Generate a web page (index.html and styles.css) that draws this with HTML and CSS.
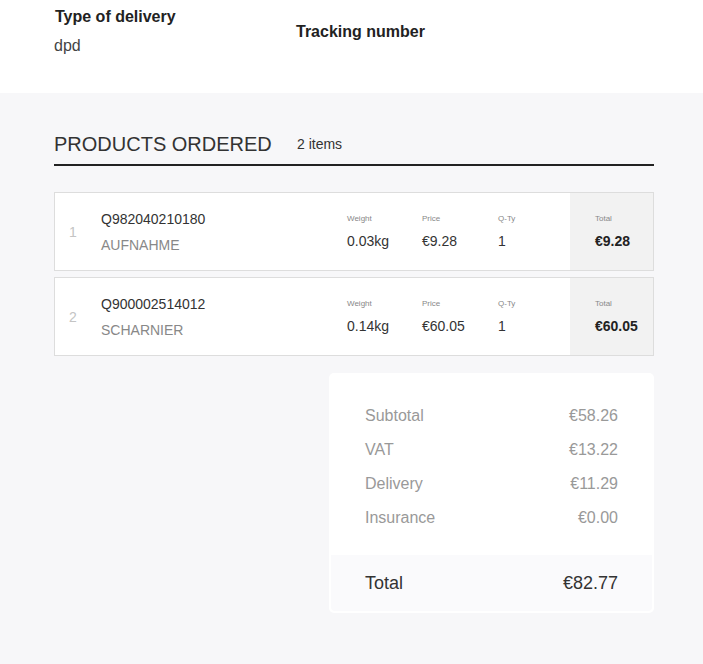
FILE: index.html
```html
<!DOCTYPE html>
<html lang="en">
<head>
<meta charset="utf-8">
<title>Order</title>
<link rel="stylesheet" href="styles.css">
</head>
<body>
<section class="delivery">
  <div class="delivery-col">
    <div class="delivery-title">Type of delivery</div>
    <div class="delivery-value">dpd</div>
  </div>
  <div class="delivery-col tracking">
    <div class="delivery-title">Tracking number</div>
  </div>
</section>
<section class="products">
  <div class="products-head">
    <h2 class="products-title">PRODUCTS ORDERED</h2>
    <span class="products-count">2 items</span>
  </div>
  <div class="product-list">
    <div class="product">
      <div class="p-index">1</div>
      <div class="p-info">
        <div class="p-code">Q982040210180</div>
        <div class="p-name">AUFNAHME</div>
      </div>
      <div class="p-cell"><div class="p-label">Weight</div><div class="p-value">0.03kg</div></div>
      <div class="p-cell"><div class="p-label">Price</div><div class="p-value">€9.28</div></div>
      <div class="p-cell"><div class="p-label">Q-Ty</div><div class="p-value">1</div></div>
      <div class="p-cell p-total"><div class="p-label">Total</div><div class="p-value">€9.28</div></div>
    </div>
    <div class="product">
      <div class="p-index">2</div>
      <div class="p-info">
        <div class="p-code">Q900002514012</div>
        <div class="p-name">SCHARNIER</div>
      </div>
      <div class="p-cell"><div class="p-label">Weight</div><div class="p-value">0.14kg</div></div>
      <div class="p-cell"><div class="p-label">Price</div><div class="p-value">€60.05</div></div>
      <div class="p-cell"><div class="p-label">Q-Ty</div><div class="p-value">1</div></div>
      <div class="p-cell p-total"><div class="p-label">Total</div><div class="p-value">€60.05</div></div>
    </div>
  </div>
  <div class="summary">
    <div class="summary-rows">
      <div class="s-row"><span>Subtotal</span><span>€58.26</span></div>
      <div class="s-row"><span>VAT</span><span>€13.22</span></div>
      <div class="s-row"><span>Delivery</span><span>€11.29</span></div>
      <div class="s-row"><span>Insurance</span><span>€0.00</span></div>
    </div>
    <div class="s-total"><span>Total</span><span>€82.77</span></div>
  </div>
</section>
</body>
</html>
```
FILE: styles.css
```css
* { box-sizing: border-box; }
html, body { margin: 0; padding: 0; }
body {
  font-family: "Liberation Sans", Arial, sans-serif;
  color: #333;
  background: #f7f7f9;
  min-height: 664px;
}
.delivery {
  background: #fff;
  height: 93px;
  display: flex;
  padding: 8px 0 0 54px;
}
.delivery-col { width: 241px; }
.delivery-title {
  font-weight: bold;
  font-size: 16px;
  line-height: 18px;
  color: #222;
  padding-left: 1px;
}
.delivery-value {
  margin-top: 11px;
  font-size: 16px;
  line-height: 18px;
  color: #444;
}
.tracking { padding-top: 15px; }

.products {
  padding: 38px 49px 52px 54px;
  display: flex;
  flex-direction: column;
}
.products-head {
  display: flex;
  align-items: center;
  border-bottom: 2px solid #222;
  padding-bottom: 7px;
}
.products-title {
  margin: 0;
  font-weight: normal;
  font-size: 20px;
  line-height: 26px;
  color: #333;
  width: 243px;
  flex-shrink: 0;
}
.products-count { font-size: 14px; line-height: 16px; color: #333; }

.product-list {
  margin-top: 26px;
  display: flex;
  flex-direction: column;
  gap: 6px;
}
.product {
  display: grid;
  grid-template-columns: 46px 246px 75px 76px 72px 83px;
  height: 79px;
  border: 1px solid #ddd;
  background: #fff;
}
.p-index {
  font-size: 14px;
  color: #c4c4c4;
  align-self: center;
  padding-left: 14px;
  padding-top: 1px;
}
.p-info { padding-top: 18px; }
.p-code { font-size: 14px; line-height: 16px; color: #333; }
.p-name { font-size: 14px; line-height: 16px; color: #888; margin-top: 10px; }
.p-cell { padding-top: 21px; }
.p-label { font-size: 8px; line-height: 10px; color: #888; }
.p-value { font-size: 14px; line-height: 16px; color: #333; margin-top: 9px; }
.p-total { background: #f2f2f2; padding-left: 25px; }
.p-total .p-value { font-weight: bold; color: #222; }

.summary {
  align-self: flex-end;
  width: 325px;
  margin-top: 17px;
  background: #fff;
  border-radius: 5px;
  padding: 0 2px 2px;
}
.summary-rows { padding: 26px 34px 20px; }
.s-row {
  display: flex;
  justify-content: space-between;
  height: 34px;
  align-items: center;
  font-size: 16px;
  color: #999;
}
.s-total {
  display: flex;
  justify-content: space-between;
  align-items: center;
  height: 56px;
  padding: 1px 34px 0;
  background: #fafafc;
  border-radius: 0 0 4px 4px;
  font-size: 18px;
  color: #333;
}
```
